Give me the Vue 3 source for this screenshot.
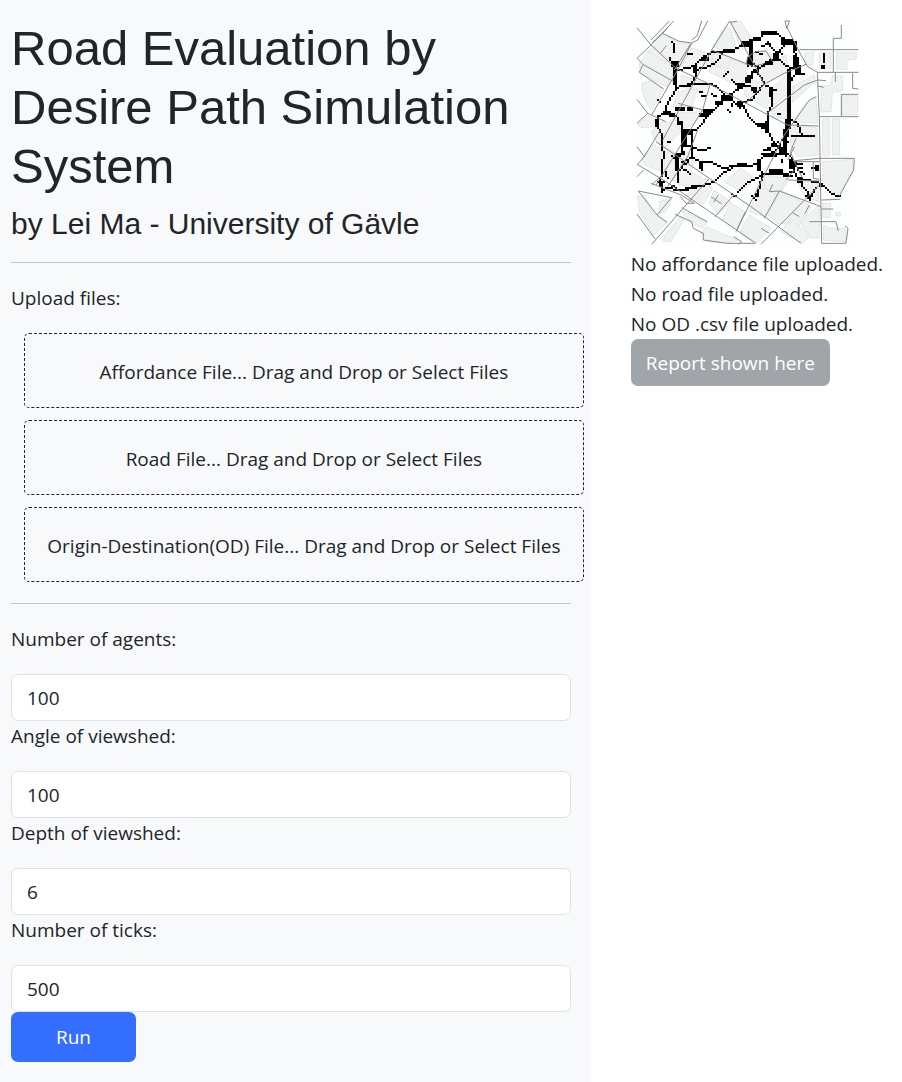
<script setup>
import { ref } from 'vue'

const uploads = [
  { id: 'affordance', text: 'Affordance File... Drag and Drop or Select Files' },
  { id: 'road', text: 'Road File... Drag and Drop or Select Files' },
  { id: 'od', text: 'Origin-Destination(OD) File... Drag and Drop or Select Files' },
]

const fields = ref([
  { id: 'agents', label: 'Number of agents:', value: '100' },
  { id: 'angle', label: 'Angle of viewshed:', value: '100' },
  { id: 'depth', label: 'Depth of viewshed:', value: '6' },
  { id: 'ticks', label: 'Number of ticks:', value: '500' },
])

const messages = [
  'No affordance file uploaded.',
  'No road file uploaded.',
  'No OD .csv file uploaded.',
]

const blocks = [
  '68,93 95,58 142,80 182,88 150,150 130,155 100,130', '25,145 50,112 80,118 128,160 125,180 108,215 28,175',
  '32,205 68,195 96,225 62,285 48,268 36,238', '150,155 182,100 238,115 260,125 240,150 190,158', '245,95 285,32 300,45 318,105 280,108',
  '300,25 330,18 360,70 345,80 325,90', '250,115 350,150 345,190 325,215 235,170', '150,180 232,210 215,232 150,215',
  '142,230 200,222 180,280 125,275', '130,295 210,290 190,325 160,340 125,310', '20,328 50,302 72,312 66,335 30,338',
  '60,350 95,318 145,330 150,350 100,400 75,378', '345,190 400,205 420,250 405,280 340,240', '365,120 400,105 430,125 385,160 368,145',
  '430,140 465,120 470,170 400,205 375,165', '425,215 470,180 470,235 425,275', '485,215 550,180 552,200 485,262', '420,290 465,250 468,310 430,312',
  '485,320 525,265 555,250 560,325', '478,340 520,330 558,340 562,420 500,425 480,395', '520,115 548,110 545,150 522,150', '565,115 600,112 600,160 565,160',
  '616,112 676,112 676,132 648,136 648,163 616,163', '570,212 598,212 605,182 635,185 635,228 604,232 600,290 570,290',
  '634,242 680,242 680,300 634,300', '575,312 595,312 595,422 575,422', '604,312 626,312 626,420 604,420', '575,440 665,433 667,465 625,535 595,530 575,500',
  '100,395 130,410 132,500 100,485', '32,430 65,385 92,405 92,470 42,450', '150,415 190,440 180,470 215,490 195,515 145,510',
  '20,545 40,540 70,600 108,622 68,660 25,590', '85,560 125,545 105,590 85,595', '185,545 225,508 245,520 215,570', '235,565 250,525 300,562 262,600',
  '165,540 225,490 245,505 190,560', '280,600 300,565 345,592 315,640 275,615', '148,585 230,622 215,640 178,622', '120,640 150,602 160,612 120,680 95,680 105,655',
  '212,655 225,635 320,675 290,685 230,680', '330,645 355,600 420,640 375,685 330,660', '355,590 395,500 440,485 470,500 400,605', '400,480 465,490 440,540 400,520',
  '410,600 450,525 540,575 505,630 440,625', '450,650 480,610 535,665 515,685', '505,620 565,570 565,668 540,670', '575,565 598,565 598,608 575,608',
  '577,632 600,640 645,640 645,680 577,675', '615,592 628,592 628,603 615,603', '500,500 560,500 565,560 520,545', '240,150 270,120 300,125 290,160',
  '50,108 70,96 110,130 100,140', '280,500 330,460 370,490 330,530',
]

const roads = [
  '18,38 60,90 135,160 237,208 345,265 470,330 562,333', '18,130 60,90 128,18', '60,75 115,18', '65,82 95,55 112,35', '95,55 142,78 182,84 200,75 230,18',
  '182,84 140,165 62,300', '178,88 130,165', '212,18 198,62 182,75', '296,18 242,105 95,375', '296,18 378,165 400,210', '242,105 368,155 400,145',
  '18,130 36,148 128,200', '36,148 25,172 98,222', '18,253 50,295 18,325', '50,295 104,320', '237,208 215,285 75,510', '142,265 215,285',
  '88,115 106,92', '300,22 318,18', '345,150 350,125 375,110 405,108 425,140', '462,18 476,18 467,40 462,18', '467,35 510,120 530,155 560,172 682,172',
  '505,104 682,104', '607,172 607,70 631,70 631,30', '559,172 565,305 572,685 645,685 651,640 642,632', '565,305 682,305', '631,305 631,238 682,238', '665,175 665,220 682,222',
  '408,295 520,210 560,195 585,197', '400,208 460,175 525,148', '556,245 535,255 460,360 405,470 315,650', '400,208 345,265', '560,213 578,217', '613,172 613,200',
  '18,395 40,425 88,345', '18,450 40,425', '18,448 105,500 195,562 375,685', '18,485 38,465', '75,380 235,490 360,575 510,685', '62,688 235,490',
  '22,528 78,600 108,622', '22,528 122,548 78,600', '62,510 98,475', '60,505 150,540 190,565 165,565 148,545', '18,597 72,672', '132,598 182,620 187,640 217,655 217,675 290,685 370,685',
  '252,605 308,540', '152,578 228,620', '110,515 170,425 200,345', '318,645 342,592', '308,665 332,680 322,688', '240,545 272,567', '262,540 248,562',
  '490,437 565,430 670,430 668,465 625,543', '390,688 565,510', '400,610 445,528 570,575', '445,528 415,530 425,508', '490,395 470,435', '490,440 565,440', '547,440 547,490 565,493',
  '465,495 490,465', '572,582 607,582', '535,620 615,620 622,648', '572,555 628,553', '485,593 505,605', '390,640 415,655', '535,570 522,595', '470,495 565,498', '495,370 478,410 490,440 515,490',
]

const paths = [
  '120,78 126,84 126,110', '172,118 182,118', '118,130 124,148 132,160 132,215 126,235 115,250 105,270 102,290 80,305 76,320 82,335 90,360 92,400 97,420 92,440 93,480 84,490 90,530',
  '140,162 188,150 210,130 240,112 310,107 325,92 342,80 360,80', '188,150 192,175 182,198 172,208', '135,218 155,210 200,205 240,207 262,220 285,240 310,230 330,210 350,190 370,165',
  '195,165 235,150 255,140 270,118', '205,228 215,232', '215,242 225,240', '240,238 255,244', '250,285 285,248', '102,290 135,305 155,330 160,350', '245,290 225,310 205,330 185,350',
  '290,170 278,180', '305,192 312,205', '290,285 296,288', '305,255 322,272 335,258', '318,275 335,265', '332,262 350,300 375,325 405,345', '300,265 305,275',
  '330,212 355,212 370,228', '375,165 385,185 400,208 435,225', '400,208 375,235 360,252 335,258', '418,225 420,270 408,290 408,350 430,385 455,400',
  '355,80 360,110 365,155', '355,80 370,68 385,68 400,55 440,58 455,70 490,78', '360,140 385,160 430,130', '410,82 418,95 435,112 435,130 400,148 370,170', '395,90 412,85', '375,112 390,115',
  '435,115 455,100 465,85 490,80', '435,125 460,145 475,160 490,158', '490,78 490,110 502,130 500,165 485,190 475,205 475,310', '500,178 520,178', '438,298 446,298', '445,112 452,115',
  '475,310 500,328 508,350 515,360', '485,365 550,365', '470,310 465,420', '425,385 415,400 400,405', '455,375 470,380', '350,130 350,155', '318,268 325,278',
  '155,360 155,410 138,420 138,500', '180,355 180,425 208,440 210,465', '155,390 182,390', '165,350 165,385', '180,398 210,405 235,398', '180,428 150,440', '212,442 242,440 280,458 310,455 325,447 360,450 380,438',
  '95,522 130,515 140,525 180,518 210,510 250,500 275,475 300,458', '145,465 155,450 170,440', '150,460 165,465 175,475', '305,538 312,542', '318,530 345,508 385,480', '112,378 115,380', '122,425 126,428', '104,482 108,486',
  '78,503 100,500', '120,518 130,525', '145,420 155,412', '380,438 400,420 470,418 485,430 490,465 470,478 400,478 385,465 385,435', '395,478 385,510 375,540', '365,540 375,552',
  '435,478 480,485', '410,405 430,408 440,400 460,405', '480,440 515,445', '480,455 510,460', '500,465 520,475', '490,470 500,490 530,495 570,508 605,535 628,543', '502,490 510,510 530,530 538,555',
  '525,545 545,545', '555,520 535,545', '450,435 455,438', '545,460 560,460', '465,420 440,380', '130,105 126,110', '78,255 84,262',
]

const blobs = [
  [120, 140, 22, 16], [126, 158, 12, 52], [184, 148, 14, 26], [268, 238, 34, 20], [134, 278, 28, 14], [165, 274, 20, 10], [215, 284, 32, 14],
  [150, 342, 38, 18], [96, 288, 22, 12], [72, 312, 12, 22], [330, 80, 28, 16], [272, 106, 40, 8], [340, 184, 20, 16], [252, 256, 22, 12], [210, 128, 24, 10], [205, 296, 30, 12],
  [320, 206, 20, 18], [318, 255, 16, 16], [354, 72, 10, 78], [366, 64, 24, 10], [392, 50, 46, 12], [450, 70, 36, 16], [484, 78, 10, 28], [424, 114, 20, 26], [488, 118, 14, 34], [492, 150, 16, 28],
  [470, 160, 12, 152], [462, 310, 16, 30], [458, 340, 14, 78], [350, 180, 18, 14], [366, 218, 14, 20], [412, 222, 12, 26], [404, 318, 8, 34], [574, 114, 8, 32], [568, 148, 10, 12],
  [400, 136, 22, 10], [372, 160, 14, 14], [376, 322, 30, 12], [150, 356, 10, 40], [132, 412, 10, 52], [204, 440, 12, 26], [318, 444, 28, 10], [82, 498, 14, 16], [104, 466, 6, 18], [130, 522, 44, 6],
  [180, 510, 30, 6], [424, 384, 14, 14], [378, 430, 10, 38], [392, 416, 76, 8], [390, 472, 40, 8], [416, 464, 44, 14], [474, 430, 14, 30], [550, 450, 12, 16], [380, 520, 8, 24],
  [566, 504, 14, 10], [498, 490, 18, 10], [530, 540, 12, 14], [446, 402, 22, 12], [486, 446, 12, 12], [150, 406, 10, 12], [116, 296, 20, 10], [140, 320, 20, 10],
]

const CELL = 6

// Turns the walked lines into grid cells, so that they are drawn as a raster trace.
function rasterize() {
  const cells = new Set()
  for (const line of paths) {
    const pts = line.split(' ').map((p) => p.split(',').map((n) => Math.floor(Number(n) / CELL)))
    for (let i = 1; i < pts.length; i++) {
      const [x0, y0] = pts[i - 1]
      const [x1, y1] = pts[i]
      const steps = Math.max(Math.abs(x1 - x0), Math.abs(y1 - y0), 1)
      for (let s = 0; s <= steps; s++) {
        const cx = Math.round(x0 + ((x1 - x0) * s) / steps)
        const cy = Math.round(y0 + ((y1 - y0) * s) / steps)
        cells.add(cx + ',' + cy)
      }
    }
  }
  for (const [x, y, w, h] of blobs) {
    const left = Math.round(x / CELL)
    const top = Math.round(y / CELL)
    const cols = Math.max(1, Math.round(w / CELL))
    const rows = Math.max(1, Math.round(h / CELL))
    for (let i = 0; i < cols; i++) {
      for (let j = 0; j < rows; j++) cells.add(left + i + ',' + (top + j))
    }
  }
  return [...cells]
    .map((c) => {
      const [x, y] = c.split(',').map(Number)
      return `M${x * CELL} ${y * CELL}h${CELL}v${CELL}h-${CELL}z`
    })
    .join('')
}

const trace = rasterize()
</script>

<template>
  <div class="page">
    <aside class="sidebar">
      <h1>Road Evaluation by Desire Path Simulation System</h1>
      <h2>by Lei Ma - University of Gävle</h2>
      <hr />
      <p class="caption">Upload files:</p>
      <div class="uploads">
        <label v-for="u in uploads" :key="u.id" class="dropzone" :for="u.id">
          {{ u.text }}
          <input :id="u.id" class="file" type="file" />
        </label>
      </div>
      <hr />
      <form @submit.prevent>
        <div v-for="f in fields" :key="f.id" class="field">
          <label class="caption" :for="f.id">{{ f.label }}</label>
          <input :id="f.id" v-model="f.value" class="control" type="text" inputmode="numeric" />
        </div>
        <button class="run" type="submit">Run</button>
      </form>
    </aside>
    <main class="result">
      <svg class="map" viewBox="0 0 690 702" role="img" aria-label="Simulated paths on a street map">
        <rect class="paper" x="15" y="15" width="669" height="672" />
        <polygon v-for="b in blocks" :key="b" class="block" :points="b" />
        <path class="trace" :d="trace" />
        <polyline v-for="r in roads" :key="r" class="road" :points="r" />
      </svg>
      <p v-for="m in messages" :key="m" class="message">{{ m }}</p>
      <button class="report" type="button" disabled>Report shown here</button>
    </main>
  </div>
</template>

<style>
body {
  margin: 0;
  background: #fff;
}
</style>

<style scoped>
.page {
  display: flex;
  min-height: 100vh;
  font-family: "Open Sans", "Noto Sans", sans-serif;
  font-size: 19px;
  line-height: 30px;
  color: #212529;
}
.sidebar {
  box-sizing: border-box;
  flex: 0 0 65.5%;
  padding: 19px 20px 20px 11px;
  background: #f8f9fa;
}
h1,
h2 {
  margin: 0;
  font-family: "Liberation Sans", Arial, sans-serif;
  font-weight: 400;
}
h1 {
  font-size: 49px;
  line-height: 59px;
}
h2 {
  margin-top: 9px;
  font-size: 30px;
  line-height: 37px;
}
hr {
  height: 1px;
  margin: 20px 0;
  border: 0;
  background: #c4c5c7;
}
.caption {
  display: block;
  margin: 0 0 20px;
}
.uploads {
  display: grid;
  gap: 12px;
  margin: 0 -13px 21px 13px;
}
.dropzone {
  box-sizing: border-box;
  padding: 23px 8px 20px;
  border: 1px dashed #212529;
  border-radius: 5px;
  text-align: center;
  cursor: pointer;
}
.file {
  position: absolute;
  width: 1px;
  height: 1px;
  opacity: 0;
}
.control {
  display: block;
  box-sizing: border-box;
  width: 100%;
  height: 47px;
  padding: 7px 15px;
  border: 1px solid #dee2e6;
  border-radius: 7px;
  background: #fff;
  color: inherit;
  font: inherit;
}
.run,
.report {
  display: block;
  border: 0;
  border-radius: 7px;
  color: #fff;
  font: inherit;
}
.run {
  width: 125px;
  height: 50px;
  background: #346eff;
}
.result {
  flex: 1;
  min-width: 0;
  padding: 15px 11px 20px 40px;
}
.map {
  display: block;
  width: 230px;
  height: 234px;
}
.paper {
  fill: #fdfefe;
}
.block {
  fill: #f0f1f1;
  stroke: #dcdede;
  stroke-width: 3;
  stroke-dasharray: 6 3;
}
.road {
  fill: none;
  stroke: #8a8a8a;
  stroke-width: 3;
}
.trace {
  fill: #000;
  shape-rendering: crispEdges;
}
.message {
  margin: 0;
  white-space: nowrap;
}
.report {
  height: 47px;
  padding: 0 15px;
  background: #a0a5a9;
}
</style>
